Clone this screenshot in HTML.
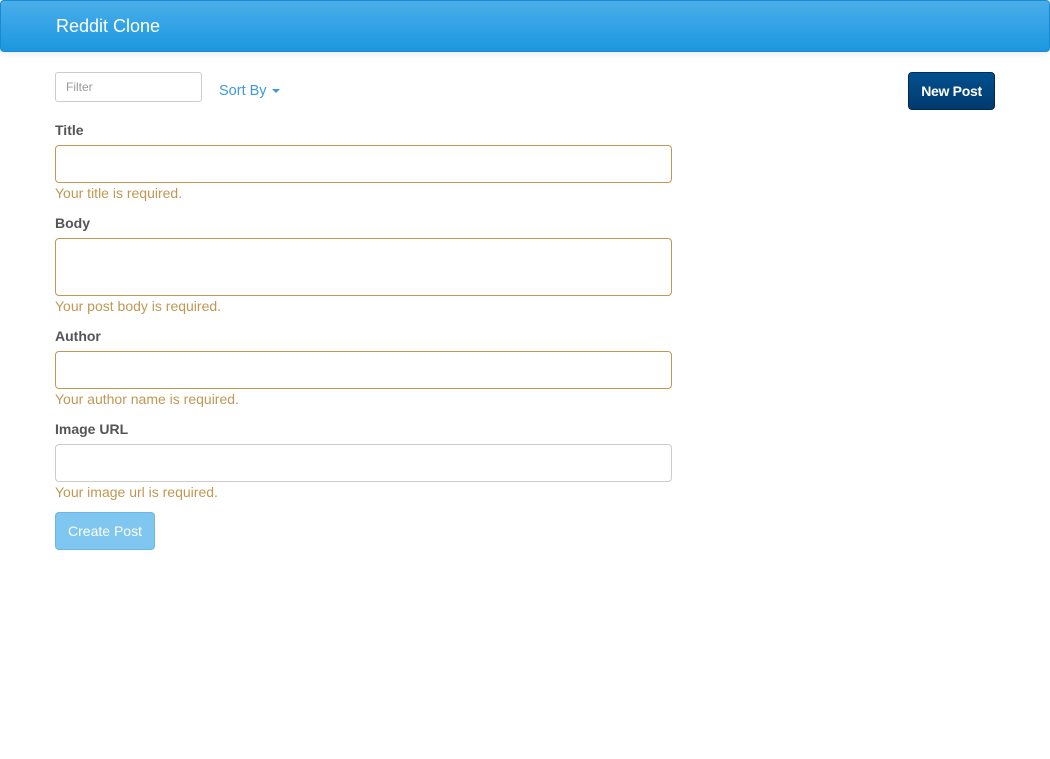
<!DOCTYPE html>
<html><head><style>
*{box-sizing:border-box}
body{margin:0;width:1050px;height:759px;background:#fff;font-family:"Liberation Sans",sans-serif;color:#555;position:relative;overflow:hidden}
.nav{position:absolute;left:0;top:0;width:1050px;height:52px;border-radius:4px;background:linear-gradient(#4aaeea,#1c97e0);border:1px solid #1a8ad0;box-shadow:0 1px 8px rgba(0,0,0,.1)}
.brand{position:absolute;left:55px;top:15px;color:#fff;font-size:18px}
.filter{position:absolute;left:55px;top:72px;width:147px;height:30px;border:1px solid #ccc;border-radius:3px;font-size:12px;color:#999;padding:7px 10px}
.sort{position:absolute;left:219px;top:83px;font-size:14.5px;color:#3c9ae0}
.caret{display:inline-block;border-left:4px solid transparent;border-right:4px solid transparent;border-top:4px solid #3c9ae0;margin-left:5px;vertical-align:middle}
.newp{position:absolute;left:908px;top:72px;width:87px;height:38px;border-radius:4px;background:linear-gradient(#005090,#033a6e);border:1px solid #022a50;color:#fff;font-size:14px;font-weight:bold;text-align:center;line-height:36px;letter-spacing:-0.3px}
.lbl{position:absolute;left:55px;font-size:14px;font-weight:bold;color:#555}
.inp{position:absolute;left:55px;width:617px;border:1px solid #c09853;border-radius:4px}
.err{position:absolute;left:55px;font-size:14px;color:#c09853}
.btn{position:absolute;left:55px;top:512px;width:100px;height:38px;border-radius:4px;background:#7fc6f0;border:1px solid #6bb8e6;color:#fff;font-size:14px;text-align:center;line-height:36px}
</style></head><body>
<div class="nav"><div class="brand">Reddit Clone</div></div>
<div class="filter">Filter</div>
<div class="sort">Sort By<span class="caret"></span></div>
<div class="newp">New Post</div>
<div class="lbl" style="top:122px">Title</div>
<div class="inp" style="top:145px;height:38px"></div>
<div class="err" style="top:185px">Your title is required.</div>
<div class="lbl" style="top:215px">Body</div>
<div class="inp" style="top:238px;height:58px"></div>
<div class="err" style="top:298px">Your post body is required.</div>
<div class="lbl" style="top:328px">Author</div>
<div class="inp" style="top:351px;height:38px"></div>
<div class="err" style="top:391px">Your author name is required.</div>
<div class="lbl" style="top:421px">Image URL</div>
<div class="inp" style="top:444px;height:38px;border-color:#ccc"></div>
<div class="err" style="top:484px">Your image url is required.</div>
<div class="btn">Create Post</div>
</body></html>
